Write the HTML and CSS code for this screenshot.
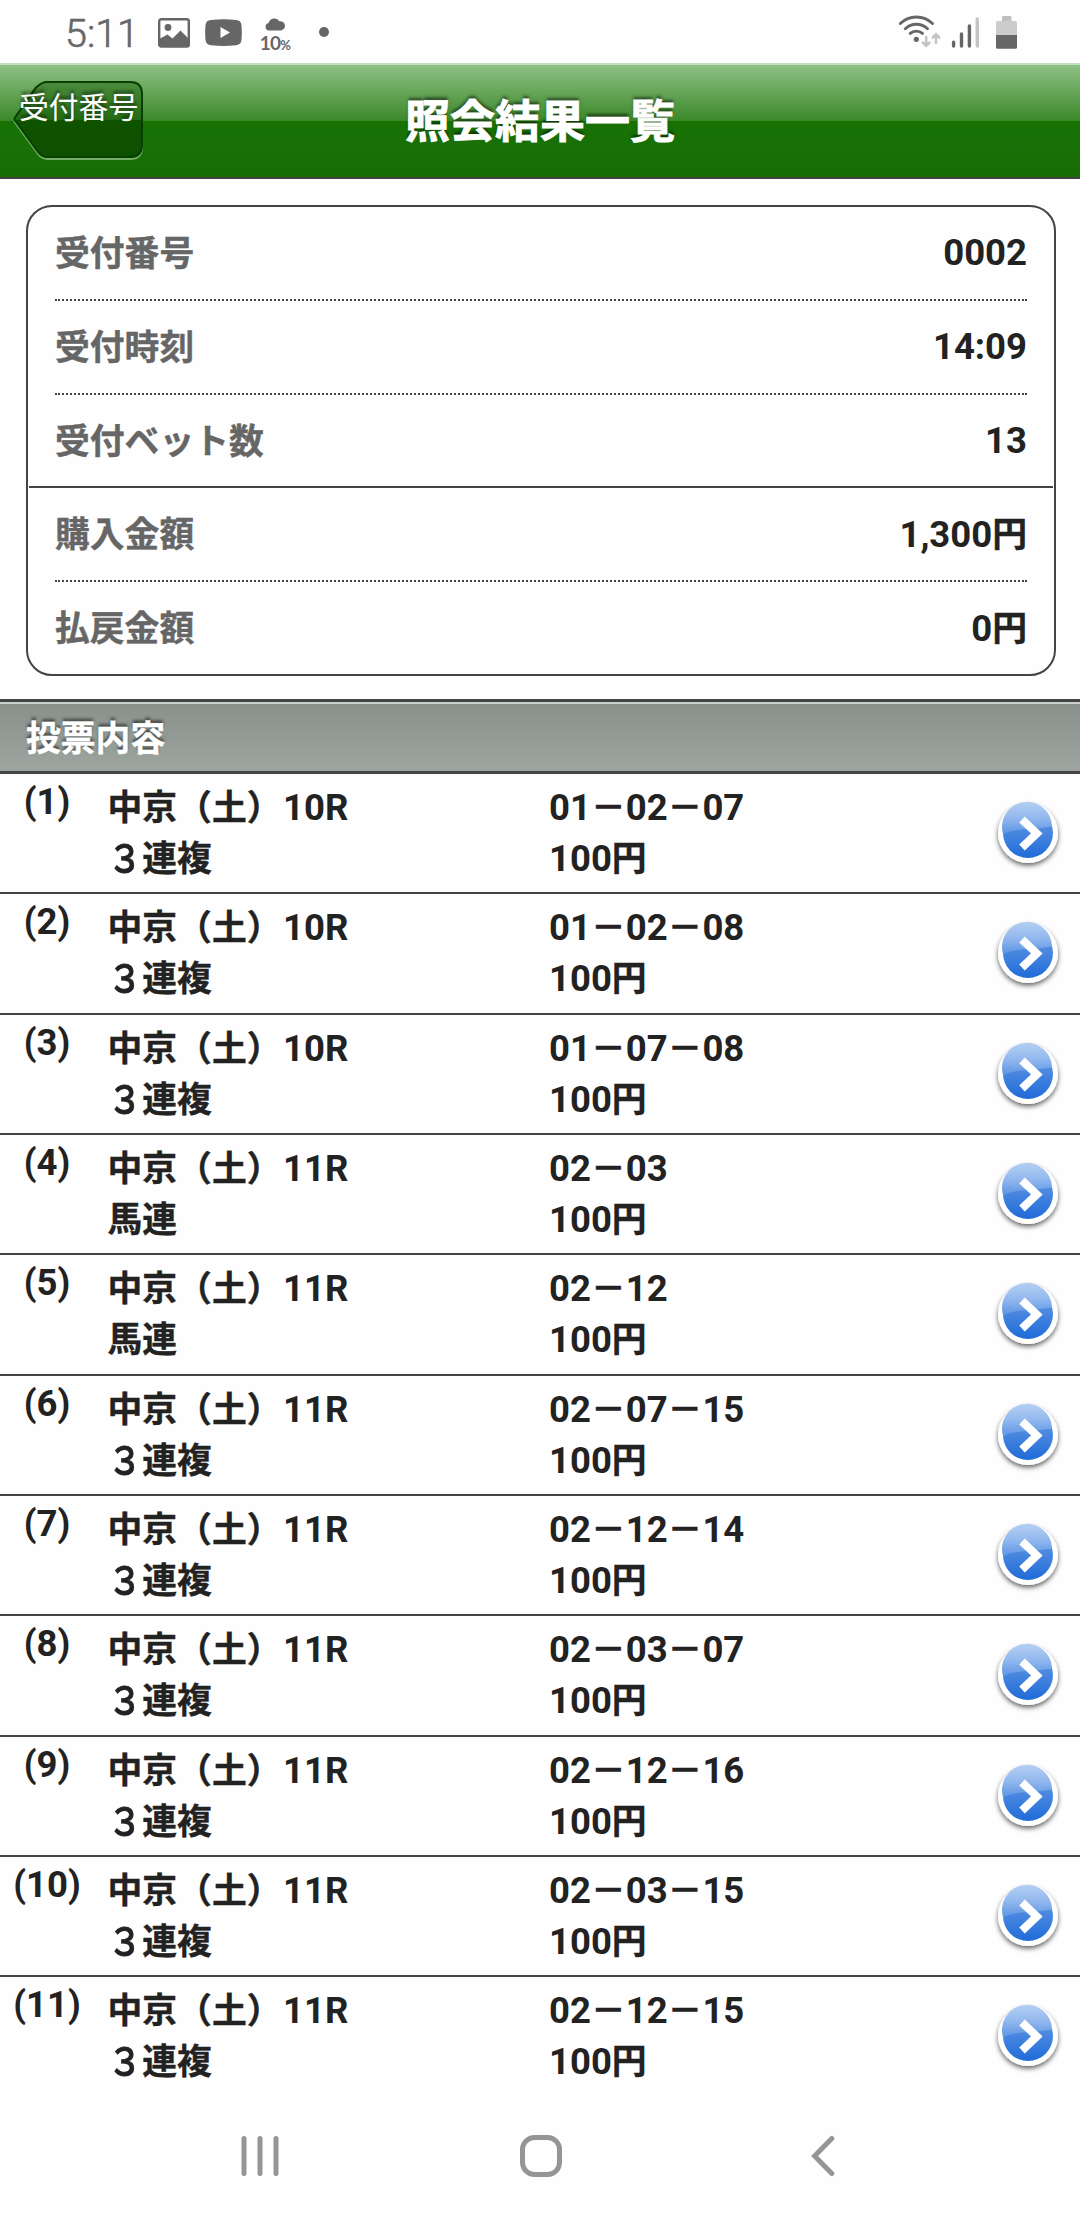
FILE: index.html
```html
<!DOCTYPE html>
<html lang="ja">
<head>
<meta charset="utf-8">
<title>照会結果一覧</title>
<link rel="stylesheet" href="styles.css">
</head>
<body>
<svg class="defs" width="0" height="0" aria-hidden="true">
  <defs>
    <linearGradient id="ballTop" x1="0" y1="0" x2="0" y2="1">
      <stop offset="0" stop-color="#b4cff3"/><stop offset=".5" stop-color="#92b8ee"/><stop offset="1" stop-color="#5b94e3"/>
    </linearGradient>
    <linearGradient id="ballBottom" x1="0" y1="0" x2="0" y2="1">
      <stop offset="0" stop-color="#4f8be0"/><stop offset="0.4" stop-color="#4f8be0"/><stop offset="1" stop-color="#1f6bd8"/>
    </linearGradient>
    <filter id="ballShadow" x="-30%" y="-30%" width="160%" height="160%">
      <feDropShadow dx="0" dy="2.5" stdDeviation="2.6" flood-color="#000" flood-opacity="0.62"/>
    </filter>
    <symbol id="go" viewBox="0 0 80 80">
      <circle cx="40" cy="40" r="30" fill="#fff" filter="url(#ballShadow)"/>
      <circle cx="40" cy="40" r="25" fill="url(#ballBottom)"/>
      <path d="M15.2 41.5A25 25 0 1 1 64 33.500Q54 35 40 36Q22 37 15.200 41.500z" fill="url(#ballTop)"/>
      <path d="M34 26.500L48.800 40.400L34 54.500" fill="none" stroke="#fff" stroke-width="8" stroke-linejoin="miter"/>
    </symbol>
  </defs>
</svg>

<div class="status">
  <div class="status-left">
    <span class="clock">5:11</span>
    <svg class="s-image" width="32" height="30" viewBox="0 0 32 30"><rect x="1.200" y="1.200" width="29.600" height="27.400" rx="2" fill="none" stroke="#666" stroke-width="2.400"/><circle cx="10" cy="9.500" r="3.400" fill="#666"/><path d="M2 20.500L9.500 16.500L14.500 20.500L22.500 12.500L30 20V28H2z" fill="#666"/></svg>
    <svg class="s-video" width="37" height="27" viewBox="0 0 37 27"><path d="M6 .9Q18.500-.6 31 .9Q35.800 1.200 36.400 5.500Q37.200 13.500 36.400 21.500Q35.800 25.800 31 26.200Q18.500 27.600 6 26.200Q1.200 25.800.6 21.500Q-.3 13.500.6 5.500Q1.200 1.200 6 .9z" fill="#666"/><path d="M15.500 8L25 13.500L15.500 19z" fill="#fefefe"/></svg>
    <div class="rain">
      <svg width="20" height="14" viewBox="0 0 20 14"><path d="M4 13.500A3.800 3.800 0 0 1 3.600 6A6 6 0 0 1 14.400 4.200A4.700 4.700 0 0 1 16 13.500z" fill="#666"/></svg>
      <span>10<small>%</small></span>
    </div>
    <i class="more"></i>
  </div>
  <div class="status-right">
    <svg width="120" height="36" viewBox="898 14 120 36">
      <g fill="none" stroke="#666" stroke-width="2.900" stroke-linecap="round">
        <path d="M900.300 23.500A23 23 0 0 1 932.500 23.500"/>
        <path d="M905.300 28.700A16 16 0 0 1 927.500 28.700"/>
        <path d="M910.200 33.400A9.500 9.500 0 0 1 922.500 33.400"/>
      </g>
      <circle cx="916.300" cy="39.300" r="2.600" fill="#666"/>
      <g fill="none" stroke="#c4c4c4" stroke-width="2.600" stroke-linecap="round">
        <path d="M926.200 37V45.300M923 42.700L926.200 45.800L929.400 42.700"/>
        <path d="M936 42.800V34.800M932.800 37.500L936 34.300L939.200 37.500"/>
      </g>
      <g fill="none" stroke="#666" stroke-width="3.400" stroke-linecap="round">
        <path d="M953.600 42.300V46M961.500 34V46M969.400 26V46"/>
        <path d="M977.300 19V46" stroke="#c4c4c4"/>
      </g>
      <rect x="1002" y="16" width="9.500" height="6" rx="1" fill="#c0c0c0"/>
      <path d="M996 35V22.500Q996 21 997.500 21H1015.500Q1017 21 1017 22.500V35z" fill="#ccc"/>
      <path d="M996 35H1017V47.300Q1017 48.800 1015.500 48.800H997.500Q996 48.800 996 47.300z" fill="#666"/>
    </svg>
  </div>
</div>

<header class="topbar">
  <a class="back">
    <svg width="132" height="82" viewBox="0 0 132 82">
      <defs>
        <linearGradient id="backFill" x1="0" y1="0" x2="0" y2="1">
          <stop offset="0" stop-color="#4c8c3e"/><stop offset=".505" stop-color="#226a12"/>
          <stop offset=".505" stop-color="#0f5300"/><stop offset="1" stop-color="#0c5000"/>
        </linearGradient>
      </defs>
      <path d="M2 42.500Q1 41 2 39.500L23 9Q29 3 34 3H117Q129 3 129 15V67Q129 79 117 79H34Q29 79 25 74z" fill="none" stroke="#73ae65" stroke-width="2"/>
      <path d="M2 40.500Q1 39 2 37.500L23 7.500Q29 2 34 2H117Q129 2 129 14V65Q129 77 117 77H34Q29 77 25 72z" fill="url(#backFill)" stroke="#063f00" stroke-width="2"/>
    </svg>
    <span>受付番号</span>
  </a>
  <h1>照会結果一覧</h1>
</header>

<main>
<dl class="summary">
  <div><dt>受付番号</dt><dd>0002</dd></div>
  <div><dt>受付時刻</dt><dd>14:09</dd></div>
  <div><dt>受付ベット数</dt><dd>13</dd></div>
  <div class="split"><dt>購入金額</dt><dd>1,300<b>円</b></dd></div>
  <div><dt>払戻金額</dt><dd>0<b>円</b></dd></div>
</dl>

<h2>投票内容</h2>
<ul class="bets">
  <li><span class="no">(1)</span><p><b>中京（土）</b>10R<br><b><i>３</i>連複</b></p><p>01<b>－</b>02<b>－</b>07<br>100<b>円</b></p><svg><use href="#go"/></svg></li>
  <li><span class="no">(2)</span><p><b>中京（土）</b>10R<br><b><i>３</i>連複</b></p><p>01<b>－</b>02<b>－</b>08<br>100<b>円</b></p><svg><use href="#go"/></svg></li>
  <li><span class="no">(3)</span><p><b>中京（土）</b>10R<br><b><i>３</i>連複</b></p><p>01<b>－</b>07<b>－</b>08<br>100<b>円</b></p><svg><use href="#go"/></svg></li>
  <li><span class="no">(4)</span><p><b>中京（土）</b>11R<br><b>馬連</b></p><p>02<b>－</b>03<br>100<b>円</b></p><svg><use href="#go"/></svg></li>
  <li><span class="no">(5)</span><p><b>中京（土）</b>11R<br><b>馬連</b></p><p>02<b>－</b>12<br>100<b>円</b></p><svg><use href="#go"/></svg></li>
  <li><span class="no">(6)</span><p><b>中京（土）</b>11R<br><b><i>３</i>連複</b></p><p>02<b>－</b>07<b>－</b>15<br>100<b>円</b></p><svg><use href="#go"/></svg></li>
  <li><span class="no">(7)</span><p><b>中京（土）</b>11R<br><b><i>３</i>連複</b></p><p>02<b>－</b>12<b>－</b>14<br>100<b>円</b></p><svg><use href="#go"/></svg></li>
  <li><span class="no">(8)</span><p><b>中京（土）</b>11R<br><b><i>３</i>連複</b></p><p>02<b>－</b>03<b>－</b>07<br>100<b>円</b></p><svg><use href="#go"/></svg></li>
  <li><span class="no">(9)</span><p><b>中京（土）</b>11R<br><b><i>３</i>連複</b></p><p>02<b>－</b>12<b>－</b>16<br>100<b>円</b></p><svg><use href="#go"/></svg></li>
  <li><span class="no">(10)</span><p><b>中京（土）</b>11R<br><b><i>３</i>連複</b></p><p>02<b>－</b>03<b>－</b>15<br>100<b>円</b></p><svg><use href="#go"/></svg></li>
  <li><span class="no">(11)</span><p><b>中京（土）</b>11R<br><b><i>３</i>連複</b></p><p>02<b>－</b>12<b>－</b>15<br>100<b>円</b></p><svg><use href="#go"/></svg></li>
</ul>
</main>

<nav class="keys">
  <svg width="38" height="42" viewBox="0 0 38 42"><path d="M3 3.500V38.500M19 3.500V38.500M35 3.500V38.500" stroke="#959595" stroke-width="5" stroke-linecap="round"/></svg>
  <svg width="42" height="42" viewBox="0 0 42 42"><rect x="2.500" y="2.500" width="37" height="37" rx="12" fill="none" stroke="#959595" stroke-width="5"/></svg>
  <svg width="24" height="42" viewBox="0 0 24 42"><path d="M20.800 3.500L3.600 21L20.800 38.500" fill="none" stroke="#959595" stroke-width="5" stroke-linecap="round"/></svg>
</nav>
</body>
</html>
```
FILE: styles.css
```css
* { box-sizing: border-box; }

body {
  margin: 0;
  width: 1080px;
  height: 2220px;
  overflow: hidden;
  display: flex;
  flex-direction: column;
  background: #fefefe;
  color: #222;
  font: 700 36.5px/51px Roboto, "Noto Sans CJK JP", sans-serif;
}

h1, h2, p, ul, dl, dd { margin: 0; padding: 0; }
svg { display: block; flex: none; }
.defs { position: absolute; }

/* Status bar */
.status {
  height: 63px;
  display: flex;
  justify-content: space-between;
  padding: 0 62px 0 65px;
  color: #666;
}
.status-left, .status-right { display: flex; align-items: flex-start; }
.clock { width: 93px; font-weight: 300; font-size: 39.5px; line-height: 46px; padding-top: 11px; -webkit-text-stroke: 0.6px #666; }
.s-image { margin-top: 18px; }
.s-video { margin: 19px 0 0 15px; }
.rain { display: flex; flex-direction: column; align-items: center; width: 30px; margin: 17px 0 0 18px; }
.rain span { font: 700 19px/20px Lato, sans-serif; margin-top: 2px; letter-spacing: -0.8px; }
.rain small { font-size: 13px; }
.more { width: 10px; height: 10px; border-radius: 50%; background: #666; margin: 27px 0 0 29px; }
.status-right { padding-top: 14px; }

/* Title bar */
.topbar {
  height: 116px;
  display: grid;
  grid-template-columns: 1fr auto 1fr;
  align-items: center;
  border-top: 2px solid #c3dfbb;
  border-bottom: 2px solid #444;
  background: linear-gradient(#8fc186, #3a8829 50%, #187202 50%, #187008 75%, #176d00);
  color: #fff;
}
.topbar h1 {
  font: 700 45px/56px "Noto Sans CJK JP", sans-serif;
  padding-bottom: 4px;
  -webkit-text-stroke: 0.9px #fff;
  text-shadow: 0 -3px 3px rgba(0, 0, 0, 0.5);
}
.back {
  display: grid;
  justify-self: start;
  margin-left: 13px;
}
.back svg, .back span { grid-area: 1 / 1; }
.back span {
  font: 400 29.8px/40px "Noto Sans CJK JP", sans-serif;
  padding: 5px 0 0 6px;
  text-shadow: 0 -3px 3px rgba(0, 0, 0, 0.5);
}

/* Receipt summary */
.summary {
  margin: 26px 24px 0 26px;
  height: 471px;
  border: 2px solid #444;
  border-radius: 26px;
  padding: 0 1px;
}
.summary div {
  display: flex;
  justify-content: space-between;
  align-items: center;
  height: 93.75px;
  margin: 0 26px;
  border-bottom: 2px dotted #444;
}
.summary div:last-child { height: 92px; border: 0; }
.summary div:nth-child(3) { margin: 0; padding: 0 26px; border-bottom-style: solid; }
dt { color: #666; padding-bottom: 2.5px; }
dt, b { font-family: "Noto Sans CJK JP", sans-serif; font-size: 34.8px; line-height: 1; font-weight: 700; -webkit-text-stroke: 0.4px; }

/* Bets */
h2 {
  margin-top: 23px;
  height: 75px;
  border-top: 3px solid #444;
  border-bottom: 3px solid #444;
  background: linear-gradient(#c8d2cb 2px, #8a918c 2px, #9ca59f);
  padding-left: 26px;
  color: #fff;
  font: 700 34.8px/68px "Noto Sans CJK JP", sans-serif;
  -webkit-text-stroke: 0.4px #fff;
  text-shadow: 0 -3px 3px rgba(0, 0, 0, 0.5);
}
.bets { list-style: none; }
.bets li {
  display: grid;
  grid-template-columns: 94px 440px 1fr 80px;
  height: 120.35px;
  padding: 0 12.5px 0 0;
  border-bottom: 2px solid #444;
}
.bets li:last-child { border-color: transparent; }
.bets p { padding: 8px 0 0 15px; white-space: nowrap; }
.bets p b:first-child, .bets br + b { margin: 0 1.5px 0 -1.5px; }
.bets p:nth-child(3) b { margin: 0; }
.bets i {
  display: inline-block;
  font-style: normal;
  font-weight: 500;
  -webkit-text-stroke: 0.7px;
  transform: scaleY(1.12);
}
.no { padding-top: 2px; text-align: center; }
.bets svg { width: 80px; height: 80px; margin-top: 19px; }

/* Navigation keys */
.keys {
  flex: 1;
  display: grid;
  grid-template-columns: 279px 291px 24px;
  padding: 37px 0 0 241px;
}
```
